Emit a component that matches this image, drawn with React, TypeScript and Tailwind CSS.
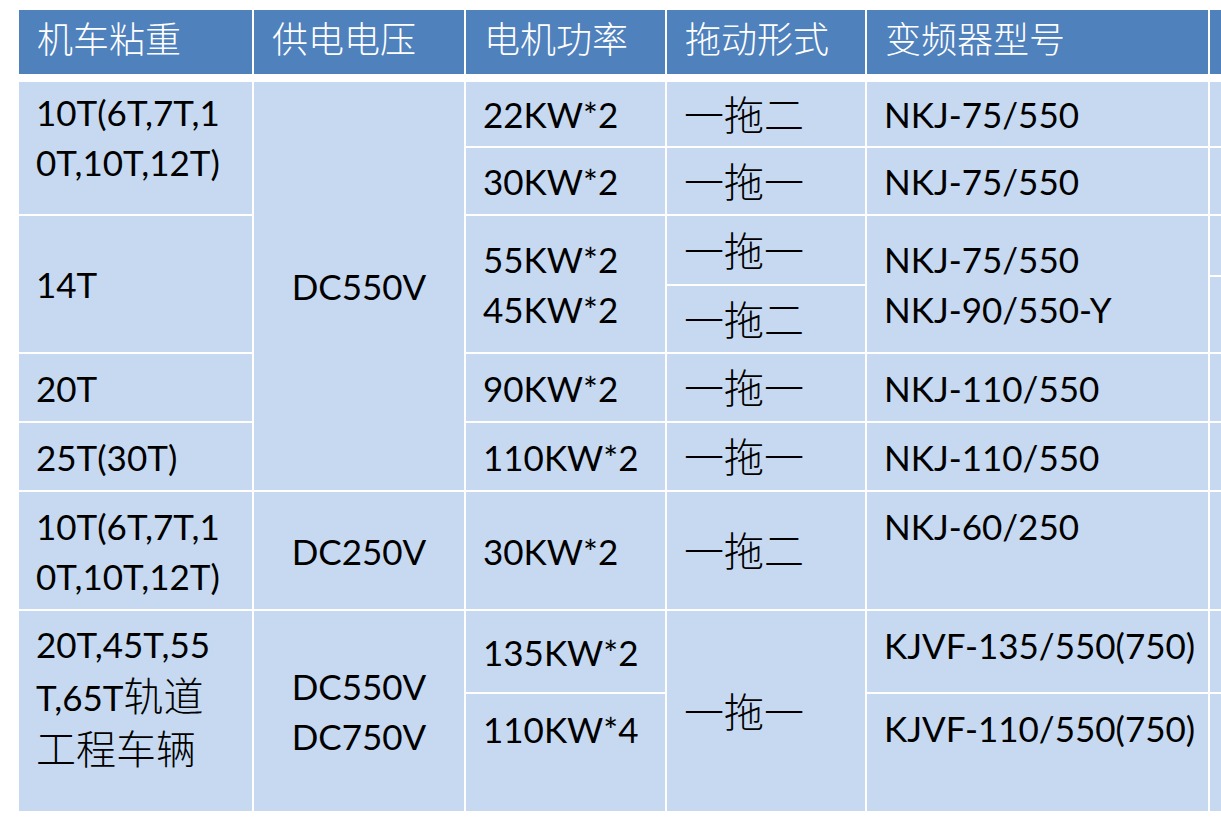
import type { ReactNode } from "react";

const headers = ["机车粘重", "供电电压", "电机功率", "拖动形式", "变频器型号", ""];

function Cjk({ children }: { children: ReactNode }) {
  return (
    <span className="font-['Noto_Sans_CJK_SC',sans-serif] text-[40px] font-light">
      {children}
    </span>
  );
}

interface Cell {
  pos: string;
  content: ReactNode;
}

// body cells placed on a 6 x 10 grid (row tracks follow the split lines of the sheet)
const cells: Cell[] = [
  // 机车粘重
  {
    pos: "col-start-1 row-start-1 row-span-2 items-start pt-[5px]",
    content: (
      <>
        10T(6T,7T,1
        <br />
        0T,10T,12T)
      </>
    ),
  },
  { pos: "col-start-1 row-start-3 row-span-3", content: "14T" },
  { pos: "col-start-1 row-start-6", content: "20T" },
  { pos: "col-start-1 row-start-7", content: "25T(30T)" },
  {
    pos: "col-start-1 row-start-8",
    content: (
      <>
        10T(6T,7T,1
        <br />
        0T,10T,12T)
      </>
    ),
  },
  {
    pos: "col-start-1 row-start-9 row-span-2 items-start pt-[8px]",
    content: (
      <>
        20T,45T,55
        <br />
        T,65T<Cjk>轨道</Cjk>
        <br />
        <Cjk>工程车辆</Cjk>
      </>
    ),
  },

  // 供电电压
  { pos: "col-start-2 row-start-1 row-span-7 justify-center text-center", content: "DC550V" },
  { pos: "col-start-2 row-start-8 justify-center text-center", content: "DC250V" },
  {
    pos: "col-start-2 row-start-9 row-span-2 justify-center text-center",
    content: (
      <>
        DC550V
        <br />
        DC750V
      </>
    ),
  },

  // 电机功率
  { pos: "col-start-3 row-start-1", content: "22KW*2" },
  { pos: "col-start-3 row-start-2", content: "30KW*2" },
  {
    pos: "col-start-3 row-start-3 row-span-3",
    content: (
      <>
        55KW*2
        <br />
        45KW*2
      </>
    ),
  },
  { pos: "col-start-3 row-start-6", content: "90KW*2" },
  { pos: "col-start-3 row-start-7", content: "110KW*2" },
  { pos: "col-start-3 row-start-8", content: "30KW*2" },
  { pos: "col-start-3 row-start-9", content: "135KW*2" },
  { pos: "col-start-3 row-start-10 items-start pt-[10px]", content: "110KW*4" },

  // 拖动形式
  { pos: "col-start-4 row-start-1", content: <Cjk>一拖二</Cjk> },
  { pos: "col-start-4 row-start-2", content: <Cjk>一拖一</Cjk> },
  { pos: "col-start-4 row-start-3 row-span-2", content: <Cjk>一拖一</Cjk> },
  { pos: "col-start-4 row-start-5", content: <Cjk>一拖二</Cjk> },
  { pos: "col-start-4 row-start-6", content: <Cjk>一拖一</Cjk> },
  { pos: "col-start-4 row-start-7", content: <Cjk>一拖一</Cjk> },
  { pos: "col-start-4 row-start-8", content: <Cjk>一拖二</Cjk> },
  { pos: "col-start-4 row-start-9 row-span-2", content: <Cjk>一拖一</Cjk> },

  // 变频器型号
  { pos: "col-start-5 row-start-1", content: "NKJ-75/550" },
  { pos: "col-start-5 row-start-2", content: "NKJ-75/550" },
  {
    pos: "col-start-5 row-start-3 row-span-3",
    content: (
      <>
        NKJ-75/550
        <br />
        NKJ-90/550-Y
      </>
    ),
  },
  { pos: "col-start-5 row-start-6", content: "NKJ-110/550" },
  { pos: "col-start-5 row-start-7", content: "NKJ-110/550" },
  { pos: "col-start-5 row-start-8 items-start pt-[9px]", content: "NKJ-60/250" },
  { pos: "col-start-5 row-start-9 items-start pt-[9px]", content: "KJVF-135/550(750)" },
  { pos: "col-start-5 row-start-10 items-start pt-[9px]", content: "KJVF-110/550(750)" },

  // cut-off column at the right edge
  { pos: "col-start-6 row-start-1", content: null },
  { pos: "col-start-6 row-start-2", content: null },
  { pos: "col-start-6 row-start-3", content: null },
  { pos: "col-start-6 row-start-4 row-span-2", content: null },
  { pos: "col-start-6 row-start-6", content: null },
  { pos: "col-start-6 row-start-7", content: null },
  { pos: "col-start-6 row-start-8", content: null },
  { pos: "col-start-6 row-start-9", content: null },
  { pos: "col-start-6 row-start-10", content: null },
];

export default function App() {
  return (
    <div className="w-[1221px] h-[829px] overflow-hidden bg-white pt-[10px] pl-[19px] font-['Lato','Noto_Sans_CJK_SC',sans-serif] text-black">
      <div className="w-[1300px]">
        <div className="grid grid-cols-[233px_210px_199px_198px_341px_100px] gap-x-[2px] h-[64px]">
          {headers.map((h, i) => (
            <div
              key={i}
              className="bg-[#4f81bd] flex items-center pl-[18px] pb-[10px] text-white text-[36px] font-light font-['Noto_Sans_CJK_SC',sans-serif] whitespace-nowrap"
            >
              {h}
            </div>
          ))}
        </div>

        <div className="mt-[8px] grid grid-cols-[233px_210px_199px_198px_341px_100px] grid-rows-[64px_66px_59px_7px_66px_67px_67px_117px_81px_117px] gap-[2px]">
          {cells.map((c, i) => (
            <div
              key={i}
              className={`bg-[#c6d9f0] flex items-center px-[17px] text-[35px] leading-[50px] whitespace-nowrap ${c.pos}`}
            >
              <div>{c.content}</div>
            </div>
          ))}
        </div>
      </div>
    </div>
  );
}
